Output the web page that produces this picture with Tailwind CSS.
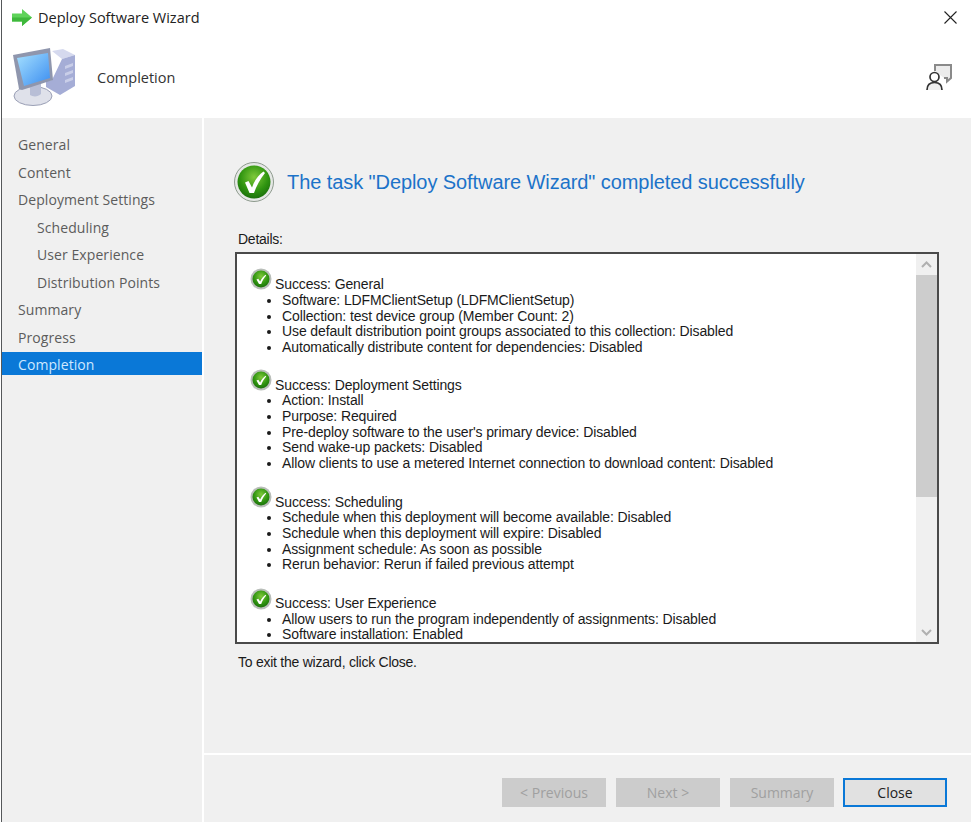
<!DOCTYPE html>
<html lang="en">

<head>
    <meta charset="UTF-8">
    <title>Deploy Software Wizard</title>
    <script src="https://cdn.jsdelivr.net/npm/@tailwindcss/browser@4"></script>
</head>

<body class="w-[971px] h-[822px] overflow-hidden bg-white font-['Liberation_Sans',sans-serif] text-[#1a1a1a]">
    <svg width="0" height="0" class="absolute">
        <defs>
            <radialGradient id="ball" cx="50%" cy="35%" r="70%">
                <stop offset="0" stop-color="#7fc93a" />
                <stop offset="0.6" stop-color="#2f9410" />
                <stop offset="1" stop-color="#17690a" />
            </radialGradient>
            <symbol id="okbig" viewBox="0 0 40 40">
                <circle cx="20" cy="20" r="19.5" fill="#e6e8e6" stroke="#8d9a8d" />
                <circle cx="20" cy="20" r="16.5" fill="url(#ball)" />
                <path d="M11 20.5l3.5-1.5 3.5 6.500C20 19 24 13.500 29.500 9.500l1.500 1.500C26 17 22.500 24 20 31h-4.500z" fill="#fff" />
            </symbol>
            <symbol id="oksmall" viewBox="0 0 22 22">
                <circle cx="11" cy="11" r="10.500" fill="#b9beb9" />
                <circle cx="11" cy="11" r="8.500" fill="url(#ball)" />
                <path d="M6.500 11.500l1.800-.8 1.800 2.800c1.400-2.800 3-4.800 5.400-6.800l.7.700c-2.300 2.500-3.900 5.500-5 8.600H9z" fill="#fff" />
            </symbol>
        </defs>
    </svg>

    <div class="flex flex-col h-full ml-[1px] border-l border-[#55585a]">
        <!-- title bar -->
        <div class="h-[35px] flex items-center pl-[10px] pr-[14px]">
            <svg width="20" height="17" viewBox="0 0 20 17">
                <path d="M0 4.500h10V0l10 8.500L10 17v-4.500H0z" fill="#5fd35a" />
                <path d="M0 8.500h20L10 17v-4.500H0z" fill="#3fb83c" />
            </svg>
            <span class="ml-[6px] font-['Open_Sans',sans-serif] text-[14.500px] text-[#222]">Deploy Software Wizard</span>
            <svg class="ml-auto" width="13" height="13" viewBox="0 0 13 13">
                <path d="M.5.5l12 12M12.500.5l-12 12" stroke="#222" stroke-width="1.100" fill="none" />
            </svg>
        </div>

        <!-- page header -->
        <div class="h-[83px] flex items-center pt-[2px] pl-[11px] pr-[19px]">
            <svg width="64" height="60" viewBox="0 0 64 60" class="mb-[4px]">
                <defs>
                    <linearGradient id="screen" x1="0" y1="0" x2="1" y2="1">
                        <stop offset="0" stop-color="#a5e0ff" />
                        <stop offset="1" stop-color="#3b8df0" />
                    </linearGradient>
                </defs>
                <path d="M39 5l11-2 12 6-13 4z" fill="#d5d9ee" />
                <path d="M49 13l13-4v31l-15 9-14-8v-6l6-1z" fill="#a5add6" />
                <path d="M52 20l8-3v3l-8 3zM52 27l8-3v3l-8 3zM52 34l8-3v3l-8 3z" fill="#c9cee8" />
                <ellipse cx="20" cy="50" rx="19" ry="9.500" fill="#dfe1ea" stroke="#9a9fb5" />
                <path d="M28 34v14c-3 3-8 3-11 1V37z" fill="#b8bed6" />
                <path d="M0 9l37-7 3 32-31 10-3-1z" fill="#8f96ad" />
                <path d="M4 12l31-5 2 25-26 8z" fill="url(#screen)" />
            </svg>
            <span class="ml-[20px] font-['Open_Sans',sans-serif] text-[14.500px] text-[#333]">Completion</span>
            <svg class="ml-auto mt-[-2px]" width="26" height="27" viewBox="0 0 26 27" fill="none">
                <path d="M9 8V2h16v13l-4 3.500V15h-3" stroke="#8a8a8a" stroke-width="2" fill="#ececec" />
                <circle cx="8.500" cy="14" r="4.500" stroke="#333" stroke-width="1.700" fill="#fff" />
                <path d="M1 27c0-5 3-7.500 7.500-7.500S16 22 16 27" stroke="#333" stroke-width="1.700" fill="#eee" />
            </svg>
        </div>

        <div class="flex-1 flex min-h-0">
            <!-- left nav -->
            <nav class="w-[200px] bg-[#f0f0f0] pt-[13px] font-['Open_Sans',sans-serif] text-[14px] tracking-[0.080px] text-[#5c5c5c] leading-[27.500px]">
                <div class="pl-[16px]">General</div>
                <div class="pl-[16px]">Content</div>
                <div class="pl-[16px]">Deployment Settings</div>
                <div class="pl-[35px]">Scheduling</div>
                <div class="pl-[35px]">User Experience</div>
                <div class="pl-[35px]">Distribution Points</div>
                <div class="pl-[16px]">Summary</div>
                <div class="pl-[16px]">Progress</div>
                <div class="pl-[16px] h-[23px] mt-[1px] leading-[25px] bg-[#0a78d7] text-[#cfe8ff]">Completion</div>
            </nav>

            <!-- main panel -->
            <main class="ml-[2px] flex-1 bg-[#f0f0f0] flex flex-col">
                <div class="flex-1 pl-[30px] pr-[32px]">
                    <div class="flex items-center pt-[44px]">
                        <svg width="40" height="40"><use href="#okbig" /></svg>
                        <h1 class="ml-[13px] text-[20px] text-[#1c73c9] tracking-[-0.080px]">The task "Deploy Software Wizard" completed successfully</h1>
                    </div>
                    <div class="mt-[29px] pl-[4px] text-[14px] leading-[16px] tracking-[-0.250px]">Details:</div>
                    <div class="mt-[5px] ml-[1px] h-[392px] border-2 border-[#4a4a4a] bg-white flex overflow-hidden">
                        <div class="flex-1 overflow-hidden pl-[13px] pt-[24px] text-[14px] leading-[15.600px] tracking-[-0.115px]">
                            <div class="mb-[23px]">
                                <div class="flex items-end h-[15px]"><svg class="mb-[3px]" width="22" height="22"><use href="#oksmall" /></svg><span class="ml-[3px]">Success: General</span></div>
                                <ul class="list-disc pl-[32px]">
                                    <li>Software: LDFMClientSetup (LDFMClientSetup)</li>
                                    <li>Collection: test device group (Member Count: 2)</li>
                                    <li>Use default distribution point groups associated to this collection: Disabled</li>
                                    <li>Automatically distribute content for dependencies: Disabled</li>
                                </ul>
                            </div>
                            <div class="mb-[24px]">
                                <div class="flex items-end h-[15px]"><svg class="mb-[2px]" width="22" height="22"><use href="#oksmall" /></svg><span class="ml-[3px]">Success: Deployment Settings</span></div>
                                <ul class="list-disc pl-[32px]">
                                    <li>Action: Install</li>
                                    <li>Purpose: Required</li>
                                    <li>Pre-deploy software to the user's primary device: Disabled</li>
                                    <li>Send wake-up packets: Disabled</li>
                                    <li>Allow clients to use a metered Internet connection to download content: Disabled</li>
                                </ul>
                            </div>
                            <div class="mb-[24px]">
                                <div class="flex items-end h-[15px]"><svg class="mb-[2px]" width="22" height="22"><use href="#oksmall" /></svg><span class="ml-[3px]">Success: Scheduling</span></div>
                                <ul class="list-disc pl-[32px]">
                                    <li>Schedule when this deployment will become available: Disabled</li>
                                    <li>Schedule when this deployment will expire: Disabled</li>
                                    <li>Assignment schedule: As soon as possible</li>
                                    <li>Rerun behavior: Rerun if failed previous attempt</li>
                                </ul>
                            </div>
                            <div>
                                <div class="flex items-end h-[15px]"><svg class="mb-[2px]" width="22" height="22"><use href="#oksmall" /></svg><span class="ml-[3px]">Success: User Experience</span></div>
                                <ul class="list-disc pl-[32px]">
                                    <li>Allow users to run the program independently of assignments: Disabled</li>
                                    <li>Software installation: Enabled</li>
                                </ul>
                            </div>
                        </div>
                        <!-- scrollbar -->
                        <div class="w-[21px] bg-[#f0f0f0] flex flex-col">
                            <div class="h-[21px] flex items-center justify-center">
                                <svg width="11" height="7" viewBox="0 0 11 7"><path d="M1 6l4.500-4.500L10 6" stroke="#b0b0b0" stroke-width="2" fill="none" /></svg>
                            </div>
                            <div class="h-[222px] bg-[#cdcdcd]"></div>
                            <div class="flex-1 flex items-end justify-center pb-[6px]">
                                <svg width="11" height="7" viewBox="0 0 11 7"><path d="M1 1l4.500 4.500L10 1" stroke="#b0b0b0" stroke-width="2" fill="none" /></svg>
                            </div>
                        </div>
                    </div>
                    <div class="mt-[10px] pl-[4px] text-[14px] leading-[16px] tracking-[-0.250px]">To exit the wizard, click Close.</div>
                </div>

                <!-- footer buttons -->
                <div class="h-[69px] border-t-2 border-white flex justify-end items-start gap-[10px] pt-[23px] pr-[24px] font-['Open_Sans',sans-serif] text-[14px]">
                    <button class="w-[104px] h-[29px] bg-[#cccccc] text-[#a0a0a0]">&lt; Previous</button>
                    <button class="w-[104px] h-[29px] bg-[#cccccc] text-[#a0a0a0]">Next &gt;</button>
                    <button class="w-[104px] h-[29px] bg-[#cccccc] text-[#a0a0a0]">Summary</button>
                    <button class="w-[104px] h-[29px] ml-[-1px] bg-[#e1e1e1] border-2 border-[#0a78d7] text-[#222]">Close</button>
                </div>
            </main>
        </div>
    </div>
</body>

</html>
